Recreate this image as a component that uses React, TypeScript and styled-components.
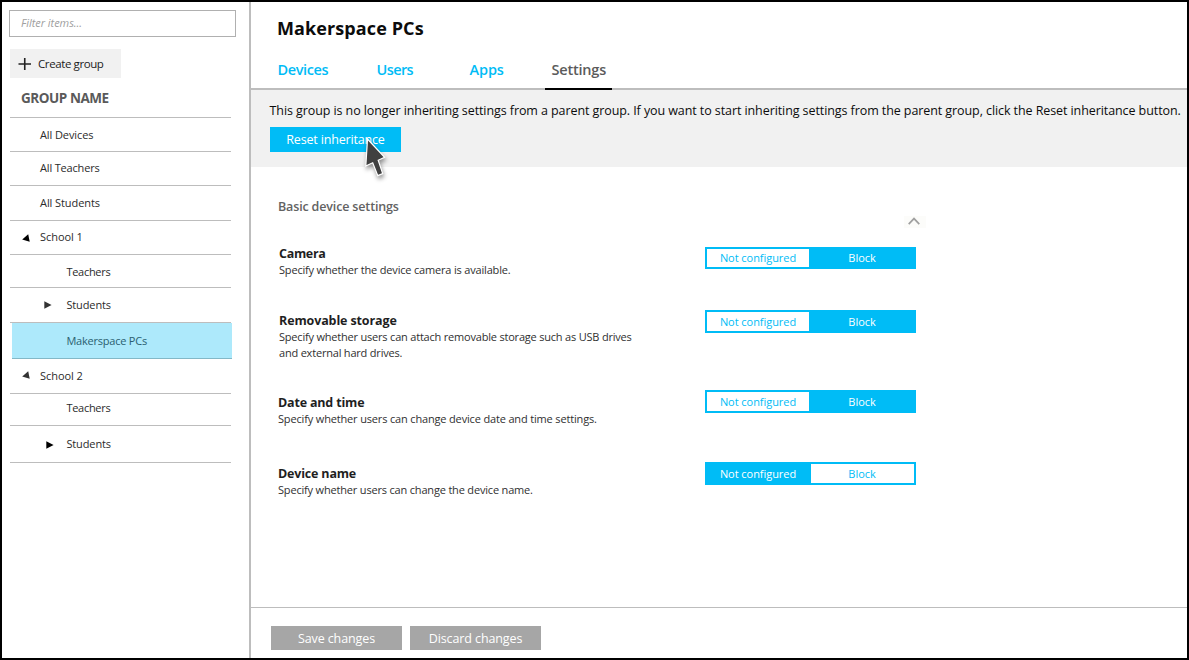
import React, { useState } from "react";
import styled, { createGlobalStyle, css } from "styled-components";

const BLUE = "#00bcf6";
const LINE = "#bdbdbd";

const GlobalStyle = createGlobalStyle`
  * { box-sizing: border-box; }
  body {
    margin: 0;
    background: #fff;
    font-family: "Open Sans", "Noto Sans", sans-serif;
    color: #2b2b2b;
  }
  button, input { font-family: inherit; border-radius: 0; }
`;

const Frame = styled.div`
  display: flex;
  width: 1189px;
  height: 660px;
  border: 2px solid #000;
  background: #fff;
  overflow: hidden;
`;

/* ---------- Sidebar ---------- */

const Sidebar = styled.aside`
  display: flex;
  flex-direction: column;
  align-items: flex-start;
  width: 249px;
  flex: none;
  padding: 8px 0 0 7px;
  border-right: 2px solid ${LINE};
`;

const FilterInput = styled.input`
  width: 227px;
  height: 27px;
  padding: 0 0 2px 11px;
  border: 1px solid #b0b0b0;
  outline: none;
  background: #fff;
  font-size: 11px;
  font-style: italic;
  letter-spacing: -0.04px;
  &::placeholder { color: #a0a0a0; opacity: 1; }
`;

const CreateButton = styled.button`
  display: flex;
  align-items: center;
  gap: 6px;
  width: 111px;
  height: 29px;
  margin: 12px 0 0 1px;
  padding: 0 0 0 8px;
  border: 0;
  background: #f1f1f1;
  color: #1c1c1c;
  font-size: 11.5px;
  line-height: 16px;
  letter-spacing: -0.4px;
`;

const GroupHeading = styled.h2`
  width: 221px;
  height: 40px;
  margin: 0 0 0 1px;
  padding: 11px 0 0 11px;
  border-bottom: 1px solid ${LINE};
  color: #5a5a5a;
  font-size: 13.5px;
  font-weight: 700;
  line-height: 18px;
  letter-spacing: -0.45px;
`;

const GroupList = styled.ul`
  margin: 0 0 0 1px;
  padding: 0;
  list-style: none;
`;

const GroupRow = styled.li<{ $height: number; $top: number; $indent: number; $track: number; $selected?: boolean }>`
  display: flex;
  width: 221px;
  height: ${(p) => p.$height}px;
  padding: ${(p) => p.$top}px 0 0 ${(p) => p.$indent}px;
  border-bottom: 1px solid ${LINE};
  font-size: 11px;
  line-height: 16px;
  letter-spacing: ${(p) => p.$track}px;
  cursor: default;
  ${(p) =>
    p.$selected &&
    css`
      margin-left: 2px;
      width: 220px;
      padding-left: ${p.$indent - 2}px;
      background: #ade9fb;
      border-bottom-color: #83b8c7;
      color: #2b5f70;
    `}
`;

const Marker = styled.svg<{ $shift: number; $drop: number }>`
  flex: none;
  width: 8px;
  height: 8px;
  margin: ${(p) => p.$drop}px 0 0 -${(p) => p.$shift}px;
  margin-right: ${(p) => p.$shift - 8}px;
`;

/* ---------- Main panel ---------- */

const Main = styled.main`
  display: flex;
  flex-direction: column;
  flex: 1;
  min-width: 0;
`;

const Header = styled.header`
  display: flex;
  flex-direction: column;
  justify-content: space-between;
  height: 88px;
  padding: 14px 0 0 26px;
  border-bottom: 2px solid ${LINE};
`;

const Title = styled.h1`
  margin: 0;
  color: #0c0c0c;
  font-size: 18px;
  font-weight: 700;
  line-height: 24px;
  letter-spacing: 0.1px;
`;

const Tabs = styled.nav`
  display: grid;
  grid-template-columns: 99px 93px 76px 67px;
  height: 30px;
  margin-bottom: -2px;
`;

const Tab = styled.a<{ $active?: boolean; $track: number }>`
  padding-left: ${(p) => (p.$active ? 6.5 : 0.5)}px;
  border-bottom: 2px solid ${(p) => (p.$active ? "#000" : "transparent")};
  color: ${(p) => (p.$active ? "#5b5b5b" : BLUE)};
  font-size: 14.5px;
  font-weight: 600;
  line-height: 20px;
  letter-spacing: ${(p) => p.$track}px;
`;

const Notice = styled.section`
  height: 77px;
  padding: 12px 0 0 18.5px;
  background: #f1f1f1;
`;

const NoticeText = styled.p`
  margin: 0 0 7px;
  color: #0c0c0c;
  font-size: 12.5px;
  line-height: 18px;
  letter-spacing: -0.084px;
  white-space: nowrap;
`;

const ResetButton = styled.button`
  position: relative;
  display: block;
  width: 131px;
  height: 25px;
  margin-left: 0.5px;
  padding: 1px 0 0;
  border: 0;
  background: ${BLUE};
  color: #fff;
  font-size: 12.5px;
  line-height: 18px;
  letter-spacing: -0.17px;
`;

const Pointer = styled.svg`
  position: absolute;
  left: 90px;
  top: 5px;
  width: 34px;
  height: 52px;
  overflow: visible;
  filter: drop-shadow(1px 3px 2px rgba(0, 0, 0, 0.4));
`;

const Settings = styled.section`
  flex: 1;
  padding: 31px 0 0 27px;
`;

const SectionHeader = styled.div`
  display: grid;
  grid-template-columns: 626px 22px;
  height: 46px;
`;

const SectionTitle = styled.h3`
  margin: 0;
  color: #626262;
  font-size: 12.5px;
  font-weight: 600;
  line-height: 18px;
  letter-spacing: -0.15px;
`;

const CollapseButton = styled.button`
  display: flex;
  align-items: flex-start;
  width: 22px;
  height: 12px;
  margin-top: 18px;
  padding: 1px 0 0 4px;
  border: 0;
  background: #fcfcfa;
`;

const SettingRow = styled.div<{ $height: number }>`
  display: grid;
  grid-template-columns: 427px 211px;
  align-items: start;
  height: ${(p) => p.$height}px;
`;

const SettingText = styled.div<{ $top: number; $inset: number }>`
  padding: ${(p) => p.$top}px 0 0 ${(p) => p.$inset}px;
`;

const SettingName = styled.h4<{ $track: number }>`
  margin: 0;
  padding-top: 1px;
  color: #1f1f1f;
  font-size: 12.5px;
  font-weight: 700;
  line-height: 17px;
  letter-spacing: ${(p) => p.$track}px;
`;

const SettingDescription = styled.p<{ $track: number }>`
  margin: 0;
  color: #303030;
  font-size: 11px;
  line-height: 16px;
  letter-spacing: ${(p) => p.$track}px;
  white-space: pre-line;
`;

const Toggle = styled.div<{ $top: number; $height: number }>`
  display: grid;
  grid-template-columns: 105px 106px;
  width: 211px;
  height: ${(p) => p.$height}px;
  margin-top: ${(p) => p.$top}px;
  background: ${BLUE};
`;

const ToggleOption = styled.button<{ $on: boolean; $first?: boolean; $lift: number }>`
  margin: 2px ${(p) => (p.$first ? "1px 2px 2px" : "2px 2px 1px")};
  padding: 0 ${(p) => (p.$first ? 0 : 1)}px ${(p) => p.$lift}px 0;
  border: 0;
  background: ${(p) => (p.$on ? BLUE : "#fff")};
  color: ${(p) => (p.$on ? "#fff" : BLUE)};
  font-size: 11px;
  line-height: 16px;
  letter-spacing: -0.05px;
`;

const Footer = styled.footer`
  display: flex;
  gap: 8px;
  height: 51px;
  padding: 18px 0 0 20px;
  border-top: 1px solid ${LINE};
`;

const FooterButton = styled.button`
  width: 131px;
  height: 24px;
  padding: 2px 0 0;
  border: 0;
  background: #a6a6a6;
  color: #fff;
  font-size: 12.5px;
  line-height: 18px;
  letter-spacing: -0.1px;
`;

/* ---------- Data ---------- */

type MarkerSpec = { kind: "open" | "closed"; fill: string; shift: number; drop: number };
type Group = { name: string; height: number; top: number; indent: number; track: number; selected?: boolean; marker?: MarkerSpec };

const groups: Group[] = [
  { name: "All Devices", height: 34, top: 9, indent: 30, track: -0.1 },
  { name: "All Teachers", height: 34, top: 8, indent: 30, track: -0.17 },
  { name: "All Students", height: 35, top: 9, indent: 30, track: -0.08 },
  { name: "School 1", height: 34, top: 8, indent: 30, track: -0.05, marker: { kind: "open", fill: "#000", shift: 18, drop: 5 } },
  { name: "Teachers", height: 33, top: 9, indent: 56.4, track: -0.28 },
  { name: "Students", height: 35, top: 9, indent: 56.4, track: -0.12, marker: { kind: "closed", fill: "#333", shift: 22.4, drop: 4 } },
  { name: "Makerspace PCs", height: 36, top: 10, indent: 56.4, track: -0.22, selected: true },
  { name: "School 2", height: 35, top: 9, indent: 30, track: -0.05, marker: { kind: "open", fill: "#333", shift: 18, drop: 3 } },
  { name: "Teachers", height: 32, top: 6, indent: 56.4, track: -0.28 },
  { name: "Students", height: 37, top: 10, indent: 56.4, track: -0.12, marker: { kind: "closed", fill: "#000", shift: 20.4, drop: 5 } },
];

const tabs = [
  { name: "Devices", track: -0.4 },
  { name: "Users", track: -0.6 },
  { name: "Apps", track: -0.1 },
  { name: "Settings", track: -0.2, active: true },
];

const settings = [
  { name: "Camera", text: "Specify whether the device camera is available.", value: "Block", height: 66, textTop: 0, inset: 1, track: -0.32, textTrack: -0.18, toggleTop: 3, toggleHeight: 22 },
  { name: "Removable storage", text: "Specify whether users can attach removable storage such as USB drives\nand external hard drives.", value: "Block", height: 80, textTop: 1, inset: 1, track: -0.12, textTrack: -0.2, toggleTop: 0, toggleHeight: 23 },
  { name: "Date and time", text: "Specify whether users can change device date and time settings.", value: "Block", height: 72, textTop: 3, inset: 0, track: -0.18, textTrack: -0.16, toggleTop: 0, toggleHeight: 23 },
  { name: "Device name", text: "Specify whether users can change the device name.", value: "Not configured", height: 60, textTop: 2, inset: 0, track: -0.18, textTrack: -0.18, toggleTop: 0, toggleHeight: 23 },
];

export default function App() {
  const [values, setValues] = useState(settings.map((s) => s.value));
  const choose = (index: number, value: string) => setValues(values.map((v, i) => (i === index ? value : v)));

  return (
    <>
      <GlobalStyle />
      <Frame>
        <Sidebar>
          <FilterInput placeholder="Filter items..." />
          <CreateButton>
            <svg width="14" height="14" viewBox="0 0 14 14">
              <path d="M0.5 7H13M6.75 1V13" stroke="#222" strokeWidth="1.6" fill="none" />
            </svg>
            Create group
          </CreateButton>
          <GroupHeading>GROUP NAME</GroupHeading>
          <GroupList>
            {groups.map((g, i) => (
              <GroupRow key={i} $height={g.height} $top={g.top} $indent={g.indent} $track={g.track} $selected={g.selected}>
                {g.marker && (
                  <Marker viewBox="0 0 8 8" $shift={g.marker.shift} $drop={g.marker.drop}>
                    <path d={g.marker.kind === "open" ? "M6.2 0.2L7.7 7.8L0.2 5.6Z" : "M0.3 0.2L7.6 4L0.3 7.8Z"} fill={g.marker.fill} />
                  </Marker>
                )}
                {g.name}
              </GroupRow>
            ))}
          </GroupList>
        </Sidebar>

        <Main>
          <Header>
            <Title>Makerspace PCs</Title>
            <Tabs>
              {tabs.map((t) => (
                <Tab key={t.name} $active={t.active} $track={t.track}>
                  {t.name}
                </Tab>
              ))}
            </Tabs>
          </Header>

          <Notice>
            <NoticeText>
              This group is no longer inheriting settings from a parent group. If you want to start inheriting settings from the
              parent group, click the Reset inheritance button.
            </NoticeText>
            <ResetButton>
              Reset inheritance
              <Pointer viewBox="0 0 34 52">
                <path
                  d="M7.5 7L24.6 25.4L18.2 28.3L22.7 41.6L17.8 43.6L12.7 30.8L5.8 34Z"
                  fill="#404040"
                  stroke="#fff"
                  strokeWidth="1.2"
                />
              </Pointer>
            </ResetButton>
          </Notice>

          <Settings>
            <SectionHeader>
              <SectionTitle>Basic device settings</SectionTitle>
              <CollapseButton aria-label="Collapse">
                <svg width="12" height="9" viewBox="0 0 12 9">
                  <path d="M0.7 7.2L6 1.6L11.3 7.2" fill="none" stroke="#a0a0a0" strokeWidth="1.7" />
                </svg>
              </CollapseButton>
            </SectionHeader>
            {settings.map((s, i) => (
              <SettingRow key={s.name} $height={s.height}>
                <SettingText $top={s.textTop} $inset={s.inset}>
                  <SettingName $track={s.track}>{s.name}</SettingName>
                  <SettingDescription $track={s.textTrack}>{s.text}</SettingDescription>
                </SettingText>
                <Toggle $top={s.toggleTop} $height={s.toggleHeight}>
                  <ToggleOption
                    $first
                    $lift={23 - s.toggleHeight}
                    $on={values[i] === "Not configured"}
                    onClick={() => choose(i, "Not configured")}
                  >
                    Not configured
                  </ToggleOption>
                  <ToggleOption $lift={23 - s.toggleHeight} $on={values[i] === "Block"} onClick={() => choose(i, "Block")}>
                    Block
                  </ToggleOption>
                </Toggle>
              </SettingRow>
            ))}
          </Settings>

          <Footer>
            <FooterButton>Save changes</FooterButton>
            <FooterButton>Discard changes</FooterButton>
          </Footer>
        </Main>
      </Frame>
    </>
  );
}
